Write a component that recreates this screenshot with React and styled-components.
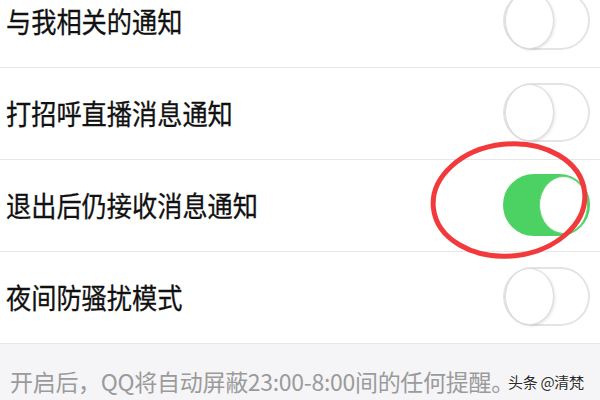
import React from "react";
import styled, { createGlobalStyle } from "styled-components";

const Global = createGlobalStyle`
  html, body { margin: 0; padding: 0; background: #fff; overflow: hidden; }
  body { font-family: "Noto Sans CJK SC", "Noto Sans", sans-serif; }
`;

const Screen = styled.div`
  position: relative;
  width: 600px;
  height: 400px;
  overflow: hidden;
  background: #fff;
`;

const List = styled.div`
  display: flex;
  flex-direction: column;
  margin-top: -24px;
`;

const Row = styled.div`
  box-sizing: border-box;
  height: 92px;
  display: flex;
  align-items: center;
  justify-content: space-between;
  padding: 0 10px 0 6px;
  border-bottom: 1px solid #e6e6e6;
`;

const Label = styled.span`
  display: inline-block;
  font-size: 28px;
  color: #111;
  line-height: 1;
  transform: scaleX(0.9);
  transform-origin: left center;
  white-space: nowrap;
  margin-top: -2px;
  -webkit-text-stroke: 0.3px #111;
`;

const Track = styled.div`
  box-sizing: border-box;
  width: 87px;
  height: ${(p) => (p.$on ? 62 : 59)}px;
  border-radius: 31px;
  display: flex;
  align-items: center;
  justify-content: ${(p) => (p.$on ? "flex-end" : "flex-start")};
  background: ${(p) => (p.$on ? "#4cd263" : "#fff")};
  border: 2px solid ${(p) => (p.$on ? "#4cd263" : "#e4e4e4")};
  margin-top: -2px;
`;

const Knob = styled.div`
  box-sizing: border-box;
  width: 49px;
  height: ${(p) => (p.$on ? 58 : 57)}px;
  border-radius: 50%;
  background: #fff;
  border: 1px solid ${(p) => (p.$on ? "#5fd474" : "#dcdcdc")};
  box-shadow: ${(p) => (p.$on ? "none" : "1px 1px 3px rgba(0,0,0,0.12)")};
`;

const Footer = styled.div`
  box-sizing: border-box;
  height: 60px;
  background: #f5f5f7;
  display: flex;
  align-items: center;
  padding: 14px 0 0 10px;
`;

const Note = styled.span`
  font-size: 23px;
  color: #9b9b9b;
  line-height: 1;
  letter-spacing: -0.3px;
  white-space: nowrap;
`;

const Watermark = styled.span`
  position: absolute;
  left: 508px;
  top: 371px;
  font-size: 15px;
  color: #2a2a2a;
  text-shadow: 0 0 2px #fff, 0 0 2px #fff, 0 0 2px #fff;
  letter-spacing: -0.3px;
`;

const Circle = styled.svg`
  position: absolute;
  left: 426px;
  top: 138px;
  overflow: visible;
`;

const Toggle = ({ on }) => (
  <Track $on={on}>
    <Knob $on={on} />
  </Track>
);

const items = [
  { label: "与我相关的通知", on: false },
  { label: "打招呼直播消息通知", on: false },
  { label: "退出后仍接收消息通知", on: true },
  { label: "夜间防骚扰模式", on: false },
];

export default function App() {
  return (
    <Screen>
      <Global />
      <List>
        {items.map((it) => (
          <Row key={it.label}>
            <Label>{it.label}</Label>
            <Toggle on={it.on} />
          </Row>
        ))}
        <Footer>
          <Note>开启后，QQ将自动屏蔽23:00-8:00间的任何提醒。</Note>
        </Footer>
      </List>
      <Circle width="165" height="122" viewBox="0 0 165 122">
        <ellipse
          cx="83"
          cy="62"
          rx="76"
          ry="56"
          transform="rotate(-6 83 62)"
          fill="none"
          stroke="#f23a3c"
          strokeWidth="5"
        />
      </Circle>
      <Watermark>头条 @清梵</Watermark>
    </Screen>
  );
}
